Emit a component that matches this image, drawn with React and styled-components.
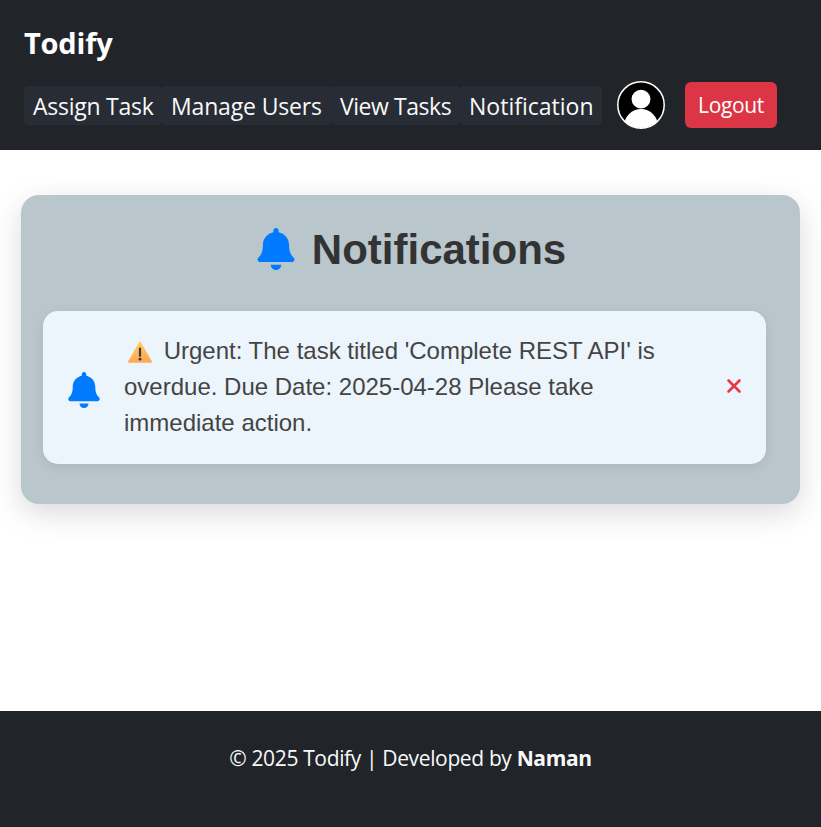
import React from "react";
import styled, { createGlobalStyle } from "styled-components";
import { FaBell } from "react-icons/fa";

const GlobalStyle = createGlobalStyle`
  *, *::before, *::after { box-sizing: border-box; }
  body { margin: 0; background: #fff; font-family: "Segoe UI", "Open Sans", "Noto Sans", sans-serif; }
`;

const Page = styled.div`
  display: flex;
  flex-direction: column;
  height: 827px;
  overflow: hidden;
`;

const Header = styled.header`
  height: 150px;
  padding: 21px 24px 0;
  background: #212529;
`;

const Brand = styled.div`
  height: 44px;
  line-height: 44px;
  font-size: 29px;
  font-weight: 700;
  letter-spacing: -0.2px;
  color: #fff;
`;

const NavRow = styled.div`
  display: flex;
  align-items: center;
  height: 48px;
  margin-top: 16px;
`;

const NavLink = styled.a`
  width: ${(p) => p.$width}px;
  height: 39px;
  padding-left: 9px;
  border-radius: 4px;
  background: #282c34;
  color: #f8f9fa;
  font-size: 23px;
  line-height: 40px;
  letter-spacing: ${(p) => p.$spacing}px;
  white-space: nowrap;
`;

const Avatar = styled.svg`
  width: 48px;
  height: 48px;
  margin-left: 15px;
`;

const LogoutButton = styled.button`
  width: 92px;
  height: 46px;
  margin-left: 20px;
  padding: 0;
  border: 0;
  border-radius: 6px;
  background: #dc3545;
  color: #fff;
  font: inherit;
  font-size: 21px;
  letter-spacing: -0.35px;
`;

const Main = styled.main`
  flex: 1;
  padding: 45px 21px 0;
`;

const Panel = styled.section`
  height: 309px;
  padding: 24px 34px 0 22px;
  border-radius: 18px;
  background: #b9c6cc;
  box-shadow: 0 9px 30px rgba(0, 0, 0, 0.15);
  font-family: Arial, "Liberation Sans", sans-serif;
`;

const Title = styled.h1`
  display: flex;
  align-items: center;
  justify-content: center;
  gap: 15px;
  height: 60px;
  margin: 0 0 32px 12px;
  color: #333;
  font-size: 42px;
  font-weight: 700;
  line-height: 60px;

  span { padding-top: 2px; }
`;

const Bell = styled(FaBell)`
  flex: none;
  width: ${(p) => p.$size}px;
  height: ${(p) => p.$size}px;
  margin-top: ${(p) => p.$drop || 0}px;
  color: #007bff;
`;

const Item = styled.article`
  display: flex;
  align-items: center;
  height: 153px;
  padding: 0 24px 0 23px;
  border-radius: 15px;
  background: #ecf4fc;
  box-shadow: 0 3px 12px rgba(0, 0, 0, 0.08);
`;

const Message = styled.p`
  width: 550px;
  margin: 0 0 2px 22px;
  color: #444;
  font-size: 24px;
  line-height: 36px;
`;

const Warning = styled.svg`
  display: inline-block;
  width: 26px;
  height: 22px;
  margin: 0 4px 0 3px;
  vertical-align: -4px;
`;

const Dismiss = styled.button`
  display: flex;
  width: 16px;
  height: 16px;
  margin: 0 0 3px auto;
  padding: 0;
  border: 0;
  background: none;
`;

const Footer = styled.footer`
  height: 116px;
  padding-top: 29px;
  background: #212529;
  color: #f8f9fa;
  font-size: 21px;
  line-height: 36px;
  letter-spacing: -0.36px;
  text-align: center;
`;

const links = [
  { label: "Assign Task", width: 138, spacing: -0.25 },
  { label: "Manage Users", width: 169, spacing: -0.15 },
  { label: "View Tasks", width: 129, spacing: -0.45 },
  { label: "Notification", width: 142, spacing: 0.01 },
];

export default function App() {
  return (
    <Page>
      <GlobalStyle />
      <Header>
        <Brand>Todify</Brand>
        <NavRow>
          {links.map((l) => (
            <NavLink key={l.label} $width={l.width} $spacing={l.spacing}>
              <span>{l.label}</span>
            </NavLink>
          ))}
          <Avatar viewBox="0 0 48 48">
            <clipPath id="face"><circle cx="24" cy="24" r="23" /></clipPath>
            <circle cx="24" cy="24" r="23.2" fill="#000" stroke="#fff" strokeWidth="1.5" />
            <g clipPath="url(#face)" fill="#fff">
              <circle cx="24" cy="18.2" r="9.4" />
              <circle cx="24" cy="44.8" r="16.8" />
            </g>
          </Avatar>
          <LogoutButton><span>Logout</span></LogoutButton>
        </NavRow>
      </Header>
      <Main>
        <Panel>
          <Title><Bell $size={42} /><span>Notifications</span></Title>
          <Item>
            <Bell $size={36} $drop={4} />
            <Message>
              <Warning viewBox="0 0 26 22">
                <defs>
                  <linearGradient id="amber" x1="0" y1="0" x2="0.3" y2="1">
                    <stop offset="0" stopColor="#ffd45a" />
                    <stop offset="1" stopColor="#ffa955" />
                  </linearGradient>
                </defs>
                <path d="M13 1.2 24.4 21H1.6z" fill="url(#amber)" stroke="url(#amber)" strokeWidth="1.4" strokeLinejoin="round" />
                <path d="M13 7.5v7.3" stroke="#40374a" strokeWidth="2.2" strokeLinecap="round" />
                <circle cx="13" cy="18.2" r="1.4" fill="#40374a" />
              </Warning>{" "}
              Urgent: The task titled 'Complete REST API' is overdue. Due Date: 2025-04-28 Please take immediate action.
            </Message>
            <Dismiss aria-label="Dismiss">
              <svg width="16" height="16" viewBox="0 0 16 16">
                <path d="M2.5 2.5l11 11M13.5 2.5l-11 11" stroke="#e63946" strokeWidth="2.6" strokeLinecap="round" />
              </svg>
            </Dismiss>
          </Item>
        </Panel>
      </Main>
      <Footer>© 2025 Todify | Developed by <strong>Naman</strong></Footer>
    </Page>
  );
}
